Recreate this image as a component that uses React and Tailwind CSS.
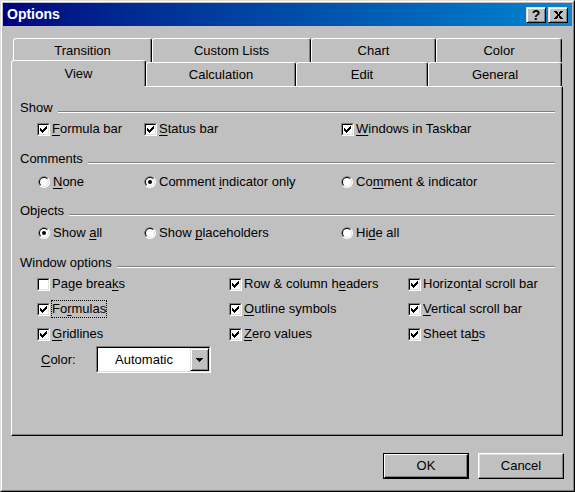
import React from "react";

const mn = (text, i) => (
  <>
    {text.slice(0, i)}
    <span className="underline underline-offset-[2px]">{text[i]}</span>
    {text.slice(i + 1)}
  </>
);

function CheckMark() {
  return (
    <svg width="7" height="7" viewBox="0 0 7 7" shapeRendering="crispEdges" className="block">
      <path
        d="M0 2h1v3H0z M1 3h1v3H1z M2 4h1v3H2z M3 3h1v3H3z M4 2h1v3H4z M5 1h1v3H5z M6 0h1v3H6z"
        fill="#000"
      />
    </svg>
  );
}

function Checkbox({ checked, children }) {
  return (
    <div className="flex items-center gap-[2px]">
      <span className="block w-[13px] h-[13px] border border-[#808080] border-r-white border-b-white shrink-0">
        <span className="block w-full h-full border border-black border-r-[#dfdfdf] border-b-[#dfdfdf] bg-white p-px">
          {checked && <CheckMark />}
        </span>
      </span>
      <span>{children}</span>
    </div>
  );
}

function Radio({ checked, children }) {
  return (
    <div className="flex items-center gap-[3px]">
      <svg width="12" height="12" viewBox="0 0 12 12" className="block shrink-0">
        <circle cx="6" cy="6" r="6" fill="#fff" />
        <path d="M1.757 10.243A6 6 0 0 1 10.243 1.757Z" fill="#808080" />
        <circle cx="6" cy="6" r="5" fill="#dfdfdf" />
        <path d="M2.464 9.536A5 5 0 0 1 9.536 2.464Z" fill="#000" />
        <circle cx="6" cy="6" r="4" fill="#fff" />
        {checked && <circle cx="6" cy="6" r="2" fill="#000" />}
      </svg>
      <span>{children}</span>
    </div>
  );
}

function Header({ children, className }) {
  return (
    <div className={"flex items-center h-4 pl-[8px] pr-[7px] " + className}>
      <span className="pr-[5px]">{children}</span>
      <div className="flex-1 h-0 border-t border-b border-t-[#808080] border-b-white mt-[7px]" />
    </div>
  );
}

function Tab({ className, children }) {
  return (
    <div
      className={
        "flex items-center justify-center pt-px border-t border-l border-r border-t-white border-l-white border-r-black rounded-t-[3px] shadow-[inset_-1px_0_0_#808080] bg-[#c0c0c0] " +
        className
      }
    >
      {children}
    </div>
  );
}

function Button({ isDefault, children }) {
  if (isDefault) {
    return (
      <div className="w-[86px] h-[26px] border border-black">
        <div className="w-full h-full flex items-center justify-center border border-white border-r-black border-b-black shadow-[inset_-1px_-1px_0_#808080]">
          {children}
        </div>
      </div>
    );
  }
  return (
    <div className="w-[86px] h-[26px] flex items-center justify-center border border-white border-r-black border-b-black shadow-[inset_-1px_-1px_0_#808080,inset_1px_1px_0_#dfdfdf]">
      {children}
    </div>
  );
}

function CaptionButton({ children }) {
  return (
    <div className="w-[20px] h-[16px] flex items-center justify-center bg-[#c0c0c0] border border-[#dfdfdf] border-r-black border-b-black shadow-[inset_1px_1px_0_#fff,inset_-1px_-1px_0_#808080]">
      {children}
    </div>
  );
}

export default function App() {
  return (
    <div className="w-[575px] h-[492px] bg-[#c0c0c0] font-['Liberation_Sans',Arial,sans-serif] text-[13px] text-black border border-[#dfdfdf] border-r-black border-b-black">
      <div className="w-full h-full border border-white border-r-[#808080] border-b-[#808080] p-px flex flex-col">
        {/* title bar */}
        <div className="h-[23px] flex items-center pl-[4px] pr-[4px] bg-gradient-to-r from-[#000080] to-[#1084d0]">
          <span className="text-white font-bold text-[14px] flex-1">Options</span>
          <div className="flex gap-[2px]">
            <CaptionButton>
              <span className="font-bold text-[14px] leading-none">?</span>
            </CaptionButton>
            <CaptionButton>
              <svg width="9" height="8" viewBox="0 0 9 8" shapeRendering="crispEdges">
                <path d="M0 0h2.5l2 2.6L6.5 0H9L5.8 4 9 8H6.5l-2-2.6-2 2.6H0l3.2-4z" fill="#000" />
              </svg>
            </CaptionButton>
          </div>
        </div>

        {/* body */}
        <div className="pl-[8px] mt-[12px]">
          <div className="flex ml-[2px] h-[24px]">
            <Tab className="w-[139px] h-[24px]">Transition</Tab>
            <Tab className="w-[159px] h-[24px]">Custom Lists</Tab>
            <Tab className="w-[125px] h-[24px]">Chart</Tab>
            <Tab className="w-[126px] h-[24px]">Color</Tab>
          </div>
          <div className="flex items-end h-[26px] -mt-[2px] relative z-10">
            <Tab className="w-[135px] h-[26px] relative after:absolute after:left-0 after:right-0 after:-bottom-px after:h-px after:bg-[#c0c0c0]">
              View
            </Tab>
            <Tab className="w-[150px] h-[24px]">Calculation</Tab>
            <Tab className="w-[132px] h-[24px]">Edit</Tab>
            <Tab className="w-[134px] h-[24px]">General</Tab>
          </div>

          <div className="w-[552px] h-[350px] border border-white border-r-black border-b-black shadow-[inset_-1px_-1px_0_#808080] flex flex-col">
            <Header className="mt-[13px]">Show</Header>
            <div className="flex items-center h-4 mt-[5px] pl-[25px]">
              <div className="w-[107px]">
                <Checkbox checked>{mn("Formula bar", 0)}</Checkbox>
              </div>
              <div className="w-[197px]">
                <Checkbox checked>{mn("Status bar", 0)}</Checkbox>
              </div>
              <Checkbox checked>{mn("Windows in Taskbar", 0)}</Checkbox>
            </div>

            <Header className="mt-[14px]">Comments</Header>
            <div className="flex items-center h-4 mt-[7px] pl-[26px]">
              <div className="w-[106px]">
                <Radio>{mn("None", 0)}</Radio>
              </div>
              <div className="w-[197px]">
                <Radio checked>{mn("Comment indicator only", 8)}</Radio>
              </div>
              <Radio>{mn("Comment & indicator", 2)}</Radio>
            </div>

            <Header className="mt-[13px]">Objects</Header>
            <div className="flex items-center h-4 mt-[6px] pl-[26px]">
              <div className="w-[106px]">
                <Radio checked>{mn("Show all", 5)}</Radio>
              </div>
              <div className="w-[197px]">
                <Radio>{mn("Show placeholders", 5)}</Radio>
              </div>
              <Radio>{mn("Hide all", 2)}</Radio>
            </div>

            <Header className="mt-[14px]">Window options</Header>
            <div className="flex items-center h-4 mt-[5px] pl-[25px]">
              <div className="w-[192px]">
                <Checkbox>{mn("Page breaks", 9)}</Checkbox>
              </div>
              <div className="w-[179px]">
                <Checkbox checked>{mn("Row & column headers", 14)}</Checkbox>
              </div>
              <Checkbox checked>{mn("Horizontal scroll bar", 7)}</Checkbox>
            </div>
            <div className="flex items-center h-4 mt-[9px] pl-[25px]">
              <div className="w-[192px]">
                <Checkbox checked>
                  <span className="inline-block border border-dotted border-black leading-[16px] -ml-px">
                    {mn("Formulas", 2)}
                  </span>
                </Checkbox>
              </div>
              <div className="w-[179px]">
                <Checkbox checked>{mn("Outline symbols", 0)}</Checkbox>
              </div>
              <Checkbox checked>{mn("Vertical scroll bar", 0)}</Checkbox>
            </div>
            <div className="flex items-center h-4 mt-[9px] pl-[25px]">
              <div className="w-[192px]">
                <Checkbox checked>{mn("Gridlines", 0)}</Checkbox>
              </div>
              <div className="w-[179px]">
                <Checkbox checked>{mn("Zero values", 0)}</Checkbox>
              </div>
              <Checkbox checked>{mn("Sheet tabs", 8)}</Checkbox>
            </div>

            <div className="flex items-center h-[27px] mt-[4px] pl-[29px]">
              <span className="w-[55px]">{mn("Color:", 0)}</span>
              <div className="w-[115px] h-[27px] border border-[#808080] border-r-white border-b-white">
                <div className="w-full h-full flex border border-black border-r-[#dfdfdf] border-b-[#dfdfdf] bg-white">
                  <span className="flex-1 flex items-center justify-center">Automatic</span>
                  <div className="w-[19px] h-full flex items-center justify-center bg-[#c0c0c0] border border-[#dfdfdf] border-r-black border-b-black shadow-[inset_1px_1px_0_#fff,inset_-1px_-1px_0_#808080]">
                    <svg width="7" height="4" viewBox="0 0 7 4" shapeRendering="crispEdges">
                      <path d="M0 0h7v1H0z M1 1h5v1H1z M2 2h3v1H2z M3 3h1v1H3z" fill="#000" />
                    </svg>
                  </div>
                </div>
              </div>
            </div>
          </div>
        </div>

        <div className="flex justify-end gap-[9px] mt-[17px] pr-[8px]">
          <Button isDefault>OK</Button>
          <Button>Cancel</Button>
        </div>
      </div>
    </div>
  );
}
